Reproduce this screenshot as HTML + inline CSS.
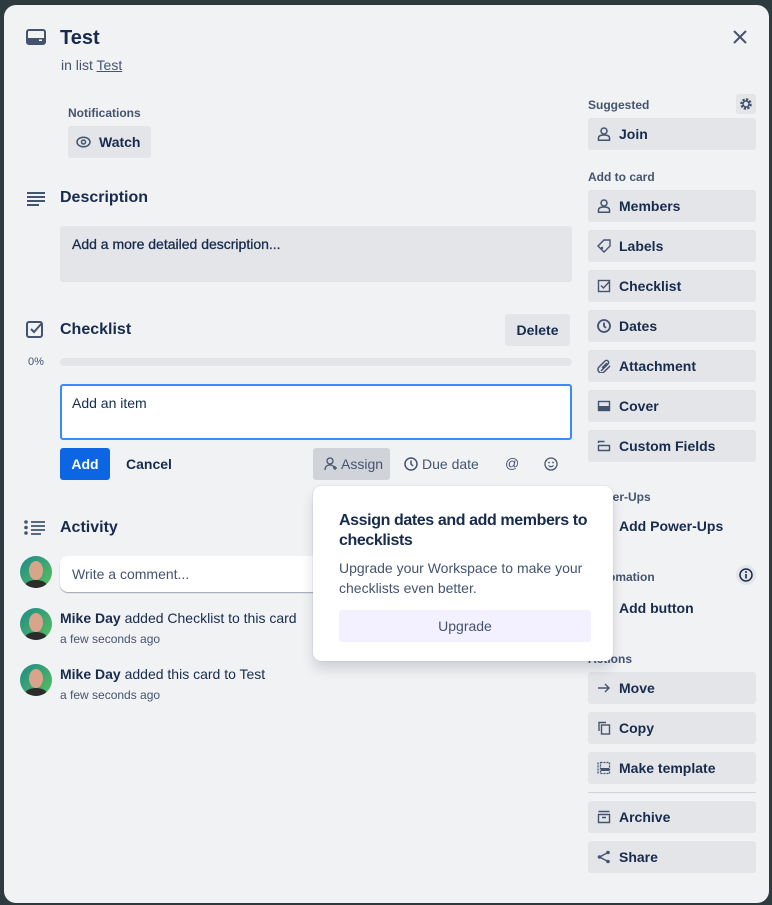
<!DOCTYPE html>
<html><head><meta charset="utf-8"><style>
*{box-sizing:border-box;margin:0;padding:0}
body{width:772px;height:905px;overflow:hidden;background:#2e3b3e;font-family:"Liberation Sans",sans-serif;color:#172b4d;position:relative}
.dlg{position:absolute;left:4px;top:5px;width:765px;height:898px;background:#f1f2f4;border-radius:12px}
.a{position:absolute}
.btn{position:absolute;left:588px;width:168px;height:32px;background:#e4e5e9;border-radius:3px;font-size:14px;font-weight:bold;color:#172b4d;line-height:32px;padding-left:31px}
.btn svg{position:absolute;left:9px;top:9px}
.lbl{position:absolute;left:588px;font-size:12px;color:#44546f;font-weight:bold}
.h{font-size:16px;font-weight:bold;color:#172b4d}
.av{position:absolute;left:20px;width:32px;height:32px;border-radius:50%;background:linear-gradient(135deg,#1c8a8a,#5cc05c);overflow:hidden}
.av::before{content:"";position:absolute;left:9px;top:5px;width:14px;height:19px;border-radius:50%;background:#d9a58a}
.av::after{content:"";position:absolute;left:5px;top:24px;width:22px;height:12px;border-radius:50% 50% 0 0;background:#2c2c2c}
</style></head><body>
<div class="dlg"></div>
<svg class="a" style="left:26px;top:29px" width="20" height="16" viewBox="0 0 20 16"><rect x="1" y="1" width="18" height="14" rx="2" fill="none" stroke="#44546f" stroke-width="2"/><rect x="2" y="9" width="16" height="5" fill="#44546f"/><rect x="13" y="10.5" width="3" height="1.5" fill="#fff"/></svg>
<div class="a" style="left:60px;top:27px;font-size:20px;font-weight:bold">Test</div>
<div class="a" style="left:61px;top:57px;font-size:14px;color:#44546f">in list <u>Test</u></div>
<svg class="a" style="left:733px;top:30px" width="14" height="14"><path d="M1 1L13 13M13 1L1 13" stroke="#44546f" stroke-width="2"/></svg>

<div class="a" style="left:68px;top:106px;font-size:12px;font-weight:bold;color:#44546f">Notifications</div>
<div class="a" style="left:68px;top:126px;width:83px;height:32px;background:#e4e5e9;border-radius:3px;font-size:14px;font-weight:bold;line-height:32px;padding-left:31px">Watch</div>
<svg class="a" style="left:76px;top:136px" width="15" height="12"><ellipse cx="7.5" cy="6" rx="6.5" ry="4.8" fill="none" stroke="#44546f" stroke-width="1.5"/><circle cx="7.5" cy="6" r="2" fill="none" stroke="#44546f" stroke-width="1.5"/></svg>

<svg class="a" style="left:27px;top:192px" width="18" height="14"><path d="M0 1H18M0 5H18M0 9H18M0 13H12" stroke="#44546f" stroke-width="2"/></svg>
<div class="a h" style="left:60px;top:189px">Description</div>
<div class="a" style="left:60px;top:226px;width:512px;height:56px;background:#e4e5e9;border-radius:3px;font-size:14px;color:#172b4d;padding:10px 12px;-webkit-text-stroke:0.3px #172b4d">Add a more detailed description...</div>

<svg class="a" style="left:26px;top:321px" width="18" height="18"><rect x="1" y="1" width="15" height="15" rx="2" fill="none" stroke="#44546f" stroke-width="2"/><path d="M5 8l3 3 8-9" fill="none" stroke="#44546f" stroke-width="2"/></svg>
<div class="a h" style="left:60px;top:321px">Checklist</div>
<div class="a" style="left:505px;top:314px;width:65px;height:32px;background:#e4e5e9;border-radius:3px;font-size:14px;font-weight:bold;text-align:center;line-height:32px">Delete</div>
<div class="a" style="left:28px;top:356px;font-size:11px;color:#44546f">0%</div>
<div class="a" style="left:60px;top:358px;width:512px;height:8px;background:#e4e5e9;border-radius:4px"></div>
<div class="a" style="left:60px;top:384px;width:512px;height:56px;background:#fff;border:2px solid #388bff;border-radius:3px;font-size:14px;padding:9px 10px;color:#172b4d">Add an item</div>
<div class="a" style="left:60px;top:448px;width:50px;height:32px;background:#0c66e4;border-radius:3px;color:#fff;font-size:14px;font-weight:bold;text-align:center;line-height:32px">Add</div>
<div class="a" style="left:126px;top:456px;font-size:14px;font-weight:bold">Cancel</div>
<div class="a" style="left:313px;top:448px;width:77px;height:32px;background:#d0d3d9;border-radius:3px"></div>
<svg class="a" style="left:324px;top:457px" width="15" height="14"><circle cx="6" cy="4" r="3" fill="none" stroke="#44546f" stroke-width="1.3"/><path d="M1 13c0-4 3-5 5-5s4 1 4 3M11 9v4M9 11h4" fill="none" stroke="#44546f" stroke-width="1.3"/></svg>
<div class="a" style="left:341px;top:456px;font-size:14px;color:#44546f">Assign</div>
<svg class="a" style="left:404px;top:457px" width="14" height="14"><circle cx="7" cy="7" r="6" fill="none" stroke="#44546f" stroke-width="1.5"/><path d="M7 3.5V7l2 2" fill="none" stroke="#44546f" stroke-width="1.5"/></svg>
<div class="a" style="left:422px;top:456px;font-size:14px;color:#44546f">Due date</div>
<div class="a" style="left:505px;top:455px;font-size:14px;color:#44546f">@</div>
<svg class="a" style="left:544px;top:457px" width="14" height="14"><circle cx="7" cy="7" r="6" fill="none" stroke="#44546f" stroke-width="1.3"/><circle cx="5" cy="5.5" r=".9" fill="#44546f"/><circle cx="9" cy="5.5" r=".9" fill="#44546f"/><path d="M4.5 8.5q2.5 2.5 5 0" fill="none" stroke="#44546f" stroke-width="1.2"/></svg>

<svg class="a" style="left:24px;top:520px" width="22" height="16"><circle cx="2" cy="2" r="1.8" fill="#44546f"/><circle cx="2" cy="7.5" r="1.8" fill="#44546f"/><circle cx="2" cy="13" r="1.8" fill="#44546f"/><path d="M7 2H21M7 6H21M7 10H21M7 14H17" stroke="#44546f" stroke-width="1.8"/></svg>
<div class="a h" style="left:60px;top:519px">Activity</div>
<div class="av" style="top:556px"></div>
<div class="a" style="left:60px;top:556px;width:280px;height:36px;background:#fff;border-radius:8px;box-shadow:0 1px 1px #9aa3b2;font-size:14px;color:#44546f;padding:10px 12px">Write a comment...</div>
<div class="av" style="top:608px"></div>
<div class="a" style="left:60px;top:610px;font-size:14px"><b>Mike Day</b> added Checklist to this card</div>
<div class="a" style="left:60px;top:632px;font-size:12px;color:#44546f">a few seconds ago</div>
<div class="av" style="top:664px"></div>
<div class="a" style="left:60px;top:666px;font-size:14px"><b>Mike Day</b> added this card to Test</div>
<div class="a" style="left:60px;top:688px;font-size:12px;color:#44546f">a few seconds ago</div>

<div class="lbl" style="top:98px">Suggested</div>
<div class="a" style="left:736px;top:94px;width:20px;height:20px;background:#e4e5e9;border-radius:3px"></div>
<svg class="a" style="left:739px;top:97px" width="14" height="14"><circle cx="7" cy="7" r="4.5" fill="none" stroke="#44546f" stroke-width="2.5" stroke-dasharray="2.2 1.3"/><circle cx="7" cy="7" r="3" fill="none" stroke="#44546f" stroke-width="1.5"/></svg>
<div class="btn" style="top:118px"><svg width="14" height="14"><circle cx="7" cy="4" r="3" fill="none" stroke="#44546f" stroke-width="1.5"/><path d="M1.5 13.2V11q0-3 5.5-3t5.5 3v2.2z" fill="none" stroke="#44546f" stroke-width="1.5"/></svg>Join</div>
<div class="lbl" style="top:170px">Add to card</div>
<div class="btn" style="top:190px"><svg width="14" height="14"><circle cx="7" cy="4" r="3" fill="none" stroke="#44546f" stroke-width="1.5"/><path d="M1.5 13.2V11q0-3 5.5-3t5.5 3v2.2z" fill="none" stroke="#44546f" stroke-width="1.5"/></svg>Members</div>
<div class="btn" style="top:230px"><svg width="14" height="14"><path d="M1 7L7 1h6v6l-6 6z" fill="none" stroke="#44546f" stroke-width="1.4"/><circle cx="5" cy="9" r="1.2" fill="#44546f"/></svg>Labels</div>
<div class="btn" style="top:270px"><svg width="14" height="14"><rect x="1.5" y="1.5" width="11" height="11" fill="none" stroke="#44546f" stroke-width="1.4"/><path d="M4 6.5l2.5 2.5 6-6.5" fill="none" stroke="#44546f" stroke-width="1.4"/></svg>Checklist</div>
<div class="btn" style="top:310px"><svg width="14" height="14"><circle cx="7" cy="7" r="6" fill="none" stroke="#44546f" stroke-width="1.8"/><path d="M7 3.5V7l2 2" fill="none" stroke="#44546f" stroke-width="1.8"/></svg>Dates</div>
<div class="btn" style="top:350px"><svg width="14" height="14"><path d="M4 12L11 5a2 2 0 0 0-3-3L2 8a3.5 3.5 0 0 0 5 5l6-6M5 9l5-5" fill="none" stroke="#44546f" stroke-width="1.5"/></svg>Attachment</div>
<div class="btn" style="top:390px"><svg width="14" height="14"><rect x="1.5" y="2.5" width="11" height="9" fill="none" stroke="#44546f" stroke-width="1.4"/><rect x="1.5" y="7" width="11" height="4.5" fill="#44546f"/></svg>Cover</div>
<div class="btn" style="top:430px"><svg width="14" height="14"><path d="M1.5 4V2.5h6M1.5 6.5h11v5h-11z" fill="none" stroke="#44546f" stroke-width="1.4"/></svg>Custom Fields</div>
<div class="lbl" style="top:490px">Power-Ups</div>
<div class="btn" style="top:510px;background:transparent">Add Power-Ups</div>
<div class="lbl" style="top:570px">Automation</div>
<div class="a" style="left:736px;top:565px;width:20px;height:20px;background:#e4e5e9;border-radius:50%"></div>
<svg class="a" style="left:739px;top:568px" width="14" height="14"><circle cx="7" cy="7" r="6" fill="none" stroke="#172b4d" stroke-width="1.5"/><path d="M7 6v4.5" stroke="#172b4d" stroke-width="1.6"/><circle cx="7" cy="4" r="1" fill="#172b4d"/></svg>
<div class="btn" style="top:592px;background:transparent">Add button</div>
<div class="lbl" style="top:652px">Actions</div>
<div class="btn" style="top:672px"><svg width="14" height="14"><path d="M1 7h11M8 3l4 4-4 4" fill="none" stroke="#44546f" stroke-width="1.4"/></svg>Move</div>
<div class="btn" style="top:712px"><svg width="14" height="14"><path d="M2 10V1.5h7" fill="none" stroke="#44546f" stroke-width="1.4"/><rect x="4.5" y="4" width="8" height="9" fill="none" stroke="#44546f" stroke-width="1.4"/></svg>Copy</div>
<div class="btn" style="top:752px"><svg width="14" height="14"><path d="M1 1.5v11M3.5 1.5h9v11h-9z" fill="none" stroke="#44546f" stroke-width="1.3" stroke-dasharray="2 1"/><rect x="4" y="7" width="8" height="3" fill="#44546f"/></svg>Make template</div>
<div class="a" style="left:588px;top:792px;width:168px;height:1px;background:#d0d3d9"></div>
<div class="btn" style="top:801px"><svg width="14" height="14"><path d="M1.5 1.5h11M1.5 4.5h11v8h-11zM5 7.5h4" fill="none" stroke="#44546f" stroke-width="1.4"/></svg>Archive</div>
<div class="btn" style="top:841px"><svg width="14" height="14"><circle cx="11" cy="2.5" r="1.8" fill="#44546f"/><circle cx="2.5" cy="7" r="1.8" fill="#44546f"/><circle cx="11" cy="11.5" r="1.8" fill="#44546f"/><path d="M11 2.5L2.5 7 11 11.5" fill="none" stroke="#44546f" stroke-width="1.4"/></svg>Share</div>

<div class="a" style="left:313px;top:486px;width:300px;height:175px;background:#fff;border-radius:8px;box-shadow:0 8px 12px rgba(9,30,66,.15),0 0 1px rgba(9,30,66,.31)">
<div class="a" style="left:26px;top:25px;width:272px;font-size:16px;font-weight:bold;line-height:20px;color:#172b4d;letter-spacing:-0.4px">Assign dates and add members to checklists</div>
<div class="a" style="left:26px;top:72px;width:260px;font-size:14px;line-height:20px;color:#44546f">Upgrade your Workspace to make your checklists even better.</div>
<div class="a" style="left:26px;top:124px;width:252px;height:32px;background:#f3f0ff;border-radius:3px;font-size:14px;color:#44546f;text-align:center;line-height:32px">Upgrade</div>
</div>
</body></html>
